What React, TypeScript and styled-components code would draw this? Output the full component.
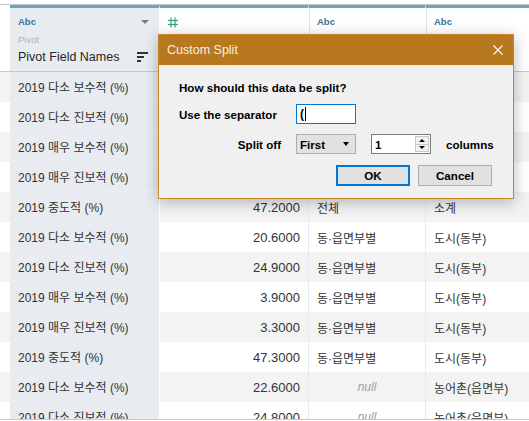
import React from 'react';
import styled, { createGlobalStyle } from 'styled-components';

const Global = createGlobalStyle`
  html, body { margin: 0; padding: 0; background: #ffffff; }
  body {
    width: 529px;
    height: 421px;
    overflow: hidden;
    font-family: "Liberation Sans", "Noto Sans CJK KR", sans-serif;
    color: #333333;
  }
`;

const Page = styled.div`
  position: relative;
  width: 529px;
  height: 421px;
  overflow: hidden;
  background: #ffffff;
`;

const Sheet = styled.div`
  height: 420px;
  box-sizing: border-box;
  padding-top: 4px;
  border-bottom: 1px solid #c9c9c9;
  overflow: hidden;
`;

const TopRule = styled.div`
  border-top: 1px solid #c6c6c6;
`;

const cols = '10px 149px 149px 117px 1fr';

const HeaderRow = styled.div`
  display: grid;
  grid-template-columns: ${cols};
  height: 67px;
`;

const HeadCell = styled.div<{ $kind: 'gutter' | 'pivot' | 'plain'; $sep?: 'white' | 'gray' }>`
  box-sizing: border-box;
  border-top: 3px solid ${(p) => (p.$kind === 'gutter' ? '#ffffff' : '#6aa5c6')};
  border-bottom: 1px solid #c8c8c8;
  border-left: ${(p) => (p.$sep ? '1px solid #ffffff' : 'none')};
  background: ${(p) => (p.$kind === 'pivot' ? '#e8ecf0' : '#ffffff')};
  padding: 8px 8px 0 8px;
  display: flex;
  flex-direction: column;
  position: relative;
  ${(p) =>
    p.$sep === 'gray'
      ? `box-shadow: inset 1px 0 0 #e4e4e4;`
      : ''}
`;

const TypeLine = styled.div`
  display: flex;
  align-items: center;
  justify-content: space-between;
  height: 12px;
`;

const TypeTag = styled.span`
  font-size: 9.5px;
  font-weight: 700;
  color: #3b7595;
  line-height: 12px;
`;

const DropTri = styled.span`
  width: 0;
  height: 0;
  border-left: 4px solid transparent;
  border-right: 4px solid transparent;
  border-top: 4px solid #7a7a7a;
  margin-right: 2px;
`;

const SubLabel = styled.div`
  font-size: 9.5px;
  color: #b0b0b0;
  line-height: 12px;
  margin-top: 6px;
`;

const NameLine = styled.div`
  display: flex;
  align-items: center;
  justify-content: space-between;
  height: 16px;
  margin-top: 3px;
`;

const FieldName = styled.span`
  font-size: 12.5px;
  color: #262626;
  line-height: 16px;
`;

const DataRow = styled.div<{ $shade: boolean }>`
  display: grid;
  grid-template-columns: ${cols};
  height: 30px;
  background: ${(p) => (p.$shade ? '#f3f3f3' : '#ffffff')};
`;

const Cell = styled.div<{ $align?: 'left' | 'right' | 'center'; $pivot?: boolean; $sep?: 'white' | 'gray' }>`
  box-sizing: border-box;
  display: flex;
  align-items: center;
  justify-content: ${(p) =>
    p.$align === 'right' ? 'flex-end' : p.$align === 'center' ? 'center' : 'flex-start'};
  padding: 0 8px;
  font-size: 12px;
  color: #333333;
  white-space: nowrap;
  overflow: hidden;
  background: ${(p) => (p.$pivot ? '#e8ecf0' : 'transparent')};
  border-bottom: ${(p) => (p.$pivot ? '1px solid #eef1f4' : 'none')};
  border-left: ${(p) =>
    p.$sep === 'white' ? '1px solid #ffffff' : p.$sep === 'gray' ? '1px solid #e9e9e9' : 'none'};
`;

const Num = styled.span`
  font-size: 13px;
`;

const Null = styled.span`
  font-style: italic;
  color: #a0a0a0;
  font-size: 12px;
`;

/* ---------- dialog ---------- */

const Dialog = styled.div`
  position: absolute;
  left: 158px;
  top: 34px;
  width: 356px;
  height: 165px;
  box-sizing: border-box;
  border: 1px solid #c8862a;
  background: #f0f0f0;
  box-shadow: 0 3px 14px rgba(0, 0, 0, 0.28);
  display: flex;
  flex-direction: column;
  font-family: "Liberation Sans", sans-serif;
`;

const TitleBar = styled.div`
  height: 30px;
  background: #b8791e;
  display: flex;
  align-items: center;
  justify-content: space-between;
  padding: 0 10px 0 8px;
`;

const Title = styled.span`
  color: #f6eee3;
  font-size: 12.5px;
`;

const Body = styled.div`
  flex: 1;
  padding: 15px 21px 0 20px;
  display: flex;
  flex-direction: column;
`;

const Question = styled.div`
  font-size: 11.6px;
  font-weight: 700;
  color: #000000;
  line-height: 16px;
`;

const Form = styled.div`
  display: grid;
  grid-template-columns: 102px 60px 60px auto;
  column-gap: 15px;
  row-gap: 10px;
  margin-top: 8px;
  align-items: center;
`;

const Label = styled.span<{ $right?: boolean }>`
  font-size: 11.6px;
  font-weight: 700;
  color: #000000;
  text-align: ${(p) => (p.$right ? 'right' : 'left')};
  white-space: nowrap;
`;

const TextBox = styled.div`
  height: 20px;
  box-sizing: border-box;
  border: 1px solid #0078d7;
  background: #ffffff;
  display: flex;
  align-items: center;
  padding-left: 3px;
  font-size: 12px;
  font-weight: 700;
  color: #000;
`;

const Caret = styled.span`
  width: 1px;
  height: 14px;
  background: #000;
  margin-left: 1px;
`;

const Select = styled.div`
  height: 20px;
  box-sizing: border-box;
  border: 1px solid #adadad;
  background: #e1e1e1;
  display: flex;
  align-items: center;
  justify-content: space-between;
  padding: 0 6px 0 3px;
  font-size: 11.6px;
  font-weight: 700;
  color: #000;
`;

const SelTri = styled.span`
  width: 0;
  height: 0;
  border-left: 3.5px solid transparent;
  border-right: 3.5px solid transparent;
  border-top: 4px solid #000;
`;

const Spinner = styled.div`
  height: 20px;
  box-sizing: border-box;
  border: 1px solid #7a7a7a;
  background: #ffffff;
  display: flex;
  align-items: center;
  justify-content: space-between;
  padding: 0 1px 0 3px;
  font-size: 11.6px;
  font-weight: 700;
  color: #000;
`;

const SpinBtns = styled.div`
  display: flex;
  flex-direction: column;
  height: 16px;
  width: 14px;
  border: 1px solid #c8c8c8;
  box-sizing: border-box;
  background: #f0f0f0;
`;

const SpinHalf = styled.div<{ $up?: boolean }>`
  flex: 1;
  display: flex;
  align-items: center;
  justify-content: center;
  border-top: ${(p) => (p.$up ? 'none' : '1px solid #c8c8c8')};
  &::after {
    content: '';
    width: 0;
    height: 0;
    border-left: 3px solid transparent;
    border-right: 3px solid transparent;
    ${(p) => (p.$up ? 'border-bottom: 3px solid #000;' : 'border-top: 3px solid #000;')}
  }
`;

const Buttons = styled.div`
  display: flex;
  justify-content: flex-end;
  gap: 8px;
  margin-top: 11px;
`;

const Btn = styled.div<{ $primary?: boolean }>`
  width: 74px;
  height: 21px;
  box-sizing: border-box;
  border: ${(p) => (p.$primary ? '2px solid #0078d7' : '1px solid #adadad')};
  background: #e1e1e1;
  display: flex;
  align-items: center;
  justify-content: center;
  font-size: 11.6px;
  font-weight: 700;
  color: #000;
`;

const SortIcon = () => (
  <svg width="12" height="12" viewBox="0 0 12 12" style={{ marginRight: 2 }}>
    <rect x="0" y="1" width="11" height="2" fill="#333" />
    <rect x="0" y="5" width="7" height="2" fill="#333" />
    <rect x="0" y="9" width="4" height="2" fill="#333" />
  </svg>
);

const HashIcon = () => (
  <svg width="10" height="11" viewBox="0 0 10 11">
    <g stroke="#3c9f79" strokeWidth="1.2" fill="none">
      <line x1="3" y1="0.5" x2="3" y2="10.5" />
      <line x1="7" y1="0.5" x2="7" y2="10.5" />
      <line x1="0" y1="3.5" x2="10" y2="3.5" />
      <line x1="0" y1="7.5" x2="10" y2="7.5" />
    </g>
  </svg>
);

const CloseIcon = () => (
  <svg width="10" height="10" viewBox="0 0 10 10">
    <g stroke="#ffffff" strokeWidth="1.1">
      <line x1="0.5" y1="0.5" x2="9.5" y2="9.5" />
      <line x1="9.5" y1="0.5" x2="0.5" y2="9.5" />
    </g>
  </svg>
);

type Row = { name: string; value: string; level: string | null; region: string };

const rows: Row[] = [
  { name: '2019 다소 보수적 (%)', value: '21.4000', level: '전체', region: '소계' },
  { name: '2019 다소 진보적 (%)', value: '24.8000', level: '전체', region: '소계' },
  { name: '2019 매우 보수적 (%)', value: '3.6000', level: '전체', region: '소계' },
  { name: '2019 매우 진보적 (%)', value: '3.0000', level: '전체', region: '소계' },
  { name: '2019 중도적 (%)', value: '47.2000', level: '전체', region: '소계' },
  { name: '2019 다소 보수적 (%)', value: '20.6000', level: '동·읍면부별', region: '도시(동부)' },
  { name: '2019 다소 진보적 (%)', value: '24.9000', level: '동·읍면부별', region: '도시(동부)' },
  { name: '2019 매우 보수적 (%)', value: '3.9000', level: '동·읍면부별', region: '도시(동부)' },
  { name: '2019 매우 진보적 (%)', value: '3.3000', level: '동·읍면부별', region: '도시(동부)' },
  { name: '2019 중도적 (%)', value: '47.3000', level: '동·읍면부별', region: '도시(동부)' },
  { name: '2019 다소 보수적 (%)', value: '22.6000', level: null, region: '농어촌(읍면부)' },
  { name: '2019 다소 진보적 (%)', value: '24.8000', level: null, region: '농어촌(읍면부)' },
];

export default function App() {
  return (
    <Page>
      <Global />
      <Sheet>
        <TopRule />
        <HeaderRow>
          <HeadCell $kind="gutter" />
          <HeadCell $kind="pivot">
            <TypeLine>
              <TypeTag>Abc</TypeTag>
              <DropTri />
            </TypeLine>
            <SubLabel>Pivot</SubLabel>
            <NameLine>
              <FieldName>Pivot Field Names</FieldName>
              <SortIcon />
            </NameLine>
          </HeadCell>
          <HeadCell $kind="plain" $sep="white">
            <TypeLine>
              <HashIcon />
            </TypeLine>
          </HeadCell>
          <HeadCell $kind="plain" $sep="gray">
            <TypeLine>
              <TypeTag>Abc</TypeTag>
            </TypeLine>
          </HeadCell>
          <HeadCell $kind="plain" $sep="gray">
            <TypeLine>
              <TypeTag>Abc</TypeTag>
            </TypeLine>
          </HeadCell>
        </HeaderRow>
        {rows.map((r, i) => (
          <DataRow key={i} $shade={i % 2 === 0}>
            <Cell />
            <Cell $pivot>{r.name}</Cell>
            <Cell $align="right" $sep="white">
              <Num>{r.value}</Num>
            </Cell>
            <Cell $align={r.level ? 'left' : 'center'} $sep="gray">
              {r.level ? r.level : <Null>null</Null>}
            </Cell>
            <Cell $sep="gray">{r.region}</Cell>
          </DataRow>
        ))}
      </Sheet>

      <Dialog>
        <TitleBar>
          <Title>Custom Split</Title>
          <CloseIcon />
        </TitleBar>
        <Body>
          <Question>How should this data be split?</Question>
          <Form>
            <Label>Use the separator</Label>
            <TextBox>
              (<Caret />
            </TextBox>
            <span />
            <span />
            <Label $right>Split off</Label>
            <Select>
              First
              <SelTri />
            </Select>
            <Spinner>
              1
              <SpinBtns>
                <SpinHalf $up />
                <SpinHalf />
              </SpinBtns>
            </Spinner>
            <Label>columns</Label>
          </Form>
          <Buttons>
            <Btn $primary>OK</Btn>
            <Btn>Cancel</Btn>
          </Buttons>
        </Body>
      </Dialog>
    </Page>
  );
}
